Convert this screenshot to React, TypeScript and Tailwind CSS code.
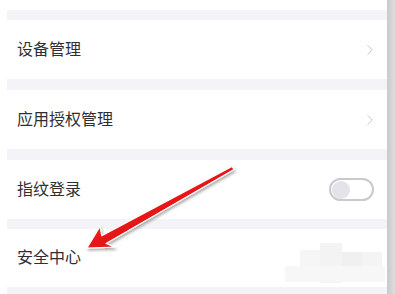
import { ChevronRight } from "lucide-react";

const FONT = "font-['Liberation_Sans','Noto_Sans_CJK_SC',sans-serif]";

interface RowProps {
  label: string;
  height: string;
  right?: "chevron" | "toggle" | "none";
}

const Row = ({ label, height, right = "none" }: RowProps) => (
  <div className={`flex items-center justify-between bg-white pl-[10px] pr-[13px] ${height}`}>
    <span className="text-[16px] leading-none text-[#2f2f33]">{label}</span>
    {right === "chevron" && (
      <ChevronRight className="w-[18px] h-[18px] text-[#c4c4c8] -mr-[5px]" strokeWidth={1.3} />
    )}
    {right === "toggle" && (
      <div className="flex items-center w-[45px] h-[23px] rounded-full border-2 border-[#c9c9ce] bg-white px-[1px]">
        <div className="w-[18px] h-[18px] rounded-full bg-[#e4e3ea]" />
      </div>
    )}
  </div>
);

const Gap = ({ height }: { height: string }) => <div className={`bg-[#f4f4f8] ${height}`} />;

const App = () => {
  return (
    <div className={`relative flex w-[395px] h-[294px] overflow-hidden bg-white ${FONT}`}>
      <div className="w-[7px] bg-white" />
      <div className="flex flex-col flex-1">
        <div className="h-[10px] bg-white" />
        <Gap height="h-[10px]" />
        <Row label="设备管理" height="h-[59px]" right="chevron" />
        <Gap height="h-[11px]" />
        <Row label="应用授权管理" height="h-[59px]" right="chevron" />
        <Gap height="h-[11px]" />
        <Row label="指纹登录" height="h-[59px]" right="toggle" />
        <Gap height="h-[10px]" />
        <Row label="安全中心" height="h-[58px]" />
        <Gap height="flex-1" />
      </div>
      <div className="w-[8px] bg-gradient-to-r from-[#c9c9c9] to-[#dedede]" />

      {/* blurred mosaic patch */}
      <svg className="absolute left-0 top-0 pointer-events-none" width="395" height="294">
        <rect x="300" y="250" width="20" height="16" fill="#f6f6f6" />
        <rect x="320" y="243" width="22" height="40" fill="#f3f3f3" />
        <rect x="342" y="252" width="20" height="14" fill="#f0f0f0" />
        <rect x="362" y="252" width="20" height="14" fill="#f4f4f4" />
        <rect x="285" y="266" width="100" height="16" fill="#f7f7f7" />
      </svg>

      {/* annotation arrow */}
      <svg className="absolute left-0 top-0 pointer-events-none" width="395" height="294">
        <defs>
          <linearGradient id="arrowFill" x1="0" y1="0" x2="1" y2="1">
            <stop offset="0" stopColor="#ff3030" />
            <stop offset="1" stopColor="#d00000" />
          </linearGradient>
          <filter id="arrowShadow" x="-20%" y="-20%" width="140%" height="140%">
            <feDropShadow dx="1" dy="2" stdDeviation="1.5" floodColor="#000" floodOpacity="0.35" />
          </filter>
        </defs>
        <polygon
          points="87,248 100,226.5 101.8,235.8 232,166.5 234,169.5 106,243.4 115,247.2"
          fill="url(#arrowFill)"
          stroke="#ffffff"
          strokeWidth="1.2"
          strokeLinejoin="round"
          filter="url(#arrowShadow)"
        />
      </svg>
    </div>
  );
};

export default App;
